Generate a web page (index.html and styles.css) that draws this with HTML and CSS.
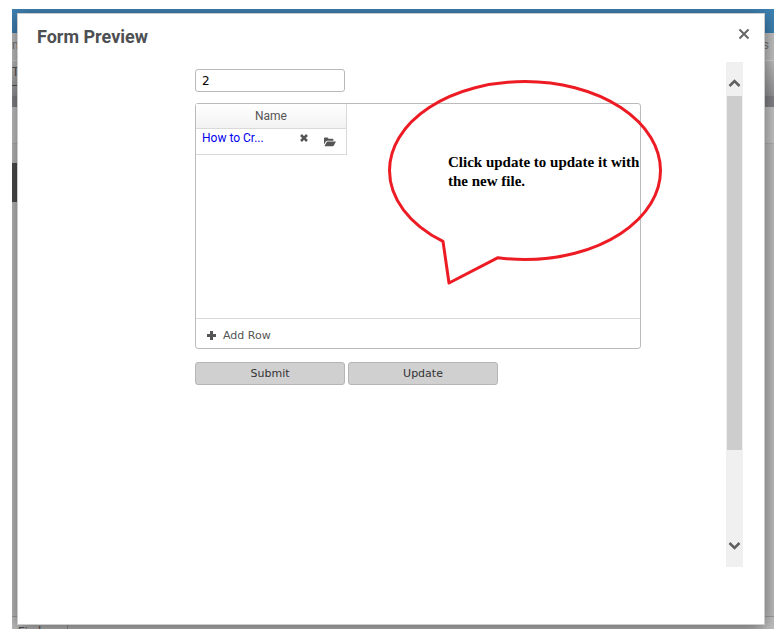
FILE: index.html
```html
<!DOCTYPE html>
<html lang="en">
<head>
<meta charset="utf-8">
<title>Form Preview</title>
<link rel="stylesheet" href="styles.css">
</head>
<body>
<div class="stage">
  <div class="page" aria-hidden="true">
    <div class="page-top"></div>
    <div class="page-nav"><span>n</span><span>s</span></div>
    <div class="page-tools"><span>Tt</span></div>
    <div class="page-rule"></div>
    <div class="page-space"></div>
    <div class="page-main"><div class="page-tab"></div></div>
    <div class="page-foot"><span>Find</span></div>
  </div>
  <section class="modal" role="dialog" aria-labelledby="title">
    <header class="modal-head">
      <h1 id="title">Form Preview</h1>
      <button class="close" type="button" aria-label="Close">
        <svg width="12" height="12" viewBox="0 0 12 12"><path d="M1.5 1.5l9 9M10.5 1.5l-9 9" stroke="#666" stroke-width="2" fill="none"/></svg>
      </button>
    </header>
    <div class="modal-body">
      <form class="form">
        <input class="field" type="text" value="2" aria-label="Value">
        <div class="grid-box">
          <div class="grid-view">
            <table class="files">
              <thead><tr><th>Name</th></tr></thead>
              <tbody><tr><td><div class="file">
                <a href="#">How to Cr...</a>
                <button class="icon remove" type="button" aria-label="Remove file"><svg width="8" height="8" viewBox="0 0 8 8"><path d="M1 1l6 6M7 1L1 7" stroke="#555" stroke-width="2.5"/></svg></button>
                <button class="icon browse" type="button" aria-label="Browse"><svg width="12" height="10" viewBox="0 0 12 10"><path d="M0 7.5V1.3Q0 .5.8.5H3.5L4.5 1.8H8.6Q9.4 1.8 9.4 2.6V3.7H3.5Q2.6 3.700 2 4.3ZM.6 9L2.700 5Q3 4.400 3.6 4.400H12L9.800 8.400Q9.400 9.200 8.600 9.200H.8Z" fill="#555"/></svg></button>
              </div></td></tr></tbody>
            </table>
          </div>
          <button class="add" type="button"><svg width="9" height="9" viewBox="0 0 9 9"><path d="M4.5 0v9M0 4.5h9" stroke="#555" stroke-width="3"/></svg>Add Row</button>
        </div>
        <div class="actions"><button type="submit">Submit</button><button type="button">Update</button></div>
        <div class="callout">
          <svg width="276" height="208" viewBox="0 0 276 208"><path d="M56 162.400A135.500 89 0 0 1 2.500 91.500A135.500 89 0 0 1 138 2.500A135.500 89 0 0 1 273.500 91.500A135.500 89 0 0 1 138 180.500A135.500 89 0 0 1 111 178.700L62 204Z" fill="none" stroke="#ed1c24" stroke-width="3" stroke-linejoin="round"/></svg>
          <p>Click update to update it with<br>the new file.</p>
        </div>
      </form>
      <div class="scrollbar" aria-hidden="true">
        <svg width="13" height="10" viewBox="0 0 13 10"><path d="M1.500 8L6.500 3l5 5" fill="none" stroke="#606060" stroke-width="2.500"/></svg>
        <div class="track"><div class="thumb"></div></div>
        <svg width="13" height="10" viewBox="0 0 13 10"><path d="M1.500 2L6.500 7l5-5" fill="none" stroke="#606060" stroke-width="2.500"/></svg>
      </div>
    </div>
  </section>
</div>
</body>
</html>
```
FILE: styles.css
```css
* { box-sizing: border-box; }
body {
  margin: 0;
  padding: 9px 8px 8px 12px;
  background: #fff;
  color: #555;
  font: 12px/16px Roboto, sans-serif;
}
button { font: inherit; color: inherit; cursor: pointer; }
svg { display: block; }
.stage { display: grid; overflow: hidden; min-height: calc(100vh - 17px); }
.page, .modal { grid-area: 1 / 1; min-width: 0; }
.page { display: flex; flex-direction: column; background: #c0c0c0; }
.page-top { height: 24px; background: #3f83b5; }
.page-nav { height: 28px; display: flex; justify-content: space-between; padding: 4px 5px 0 0; background: #c5c5c5; border-bottom: 1px solid #d5d5d5; color: #777; }
.page-tools { height: 35px; padding-top: 3px; background: linear-gradient(#c2c2c2, #97979b); }
.page-tools span { display: block; width: 20px; height: 22px; border-bottom: 1px solid #555; }
.page-rule { height: 11px; background: #85858b; }
.page-space { height: 37px; border-bottom: 1px solid #b3b3b3; background: #c8c8c8; }
.page-main { flex: 1; padding-top: 19px; }
.page-tab { width: 20px; height: 39px; background: #505050; }
.page-foot { height: 13px; border-top: 1px solid #a2a2a2; overflow: hidden; background: #c5c5c5; }
.page-foot span { display: block; width: 56px; height: 24px; padding: 7px 0 0 6px; border-right: 1px solid #999; }
.modal {
  margin: 4px 9px 4px 5px;
  padding: 0 21px 57px 19px;
  border: 1px solid #ccc;
  background: #fff;
  box-shadow: 0 4px 18px rgba(0, 0, 0, .5);
  display: flex;
  flex-direction: column;
}
.modal-head { display: flex; justify-content: space-between; height: 48px; padding-top: 8px; }
h1 { margin: 0; padding-top: 3px; font-size: 18px; line-height: 24px; font-weight: 700; color: #4d4f53; }
.close { width: 24px; height: 24px; margin-right: -13px; padding: 0; border: 0; background: none; display: grid; place-items: center; }
.modal-body { flex: 1; display: flex; }
.form { flex: 1; position: relative; margin-left: 158px; margin-right: 85px; padding-top: 7px; min-width: 0; }
.field { display: block; width: 150px; height: 23px; padding: 0 6px; border: 1px solid #b9b9b9; border-radius: 3px; color: #000; font: 12px "DejaVu Sans", sans-serif; }
.grid-box { margin-top: 11px; border: 1px solid #bbb; border-radius: 3px; }
.grid-view { height: 214px; }
.files { width: 151px; border-collapse: separate; border-spacing: 0; }
th, td { padding: 0; border: solid #d9d9d9; border-width: 0 1px 1px 0; }
th { height: 25px; font-weight: 400; font-size: 12px; background: linear-gradient(#fff, #f2f2f2); }
td { height: 26px; vertical-align: top; }
.file { display: flex; padding: 1px 10px 0 6px; }
.file a { color: #00e; text-decoration: none; width: 98px; }
.icon { padding: 0; border: 0; background: none; }
.remove { width: 24px; height: 16px; }
.browse { height: 24px; }
.add { width: 100%; height: 30px; display: flex; align-items: center; gap: 7px; padding: 3px 11px 0; border: 0; border-top: 1px solid #d9d9d9; background: none; font: 11px "DejaVu Sans", sans-serif; }
.actions { display: flex; gap: 3px; margin-top: 13px; }
.actions button { width: 150px; height: 23px; padding: 0; border: 1px solid #b5b5b5; border-radius: 3px; background: #d0d0d0; color: #333; font: 11px "DejaVu Sans", sans-serif; }
.callout { position: absolute; left: 192px; top: 17px; }
.callout p { position: absolute; left: 61px; top: 74px; margin: 0; white-space: nowrap; color: #000; font: bold 15px/19px "Liberation Serif", serif; }
.scrollbar { width: 17px; background: #f0f0f0; display: flex; flex-direction: column; align-items: center; padding: 16px 1px; }
.track { flex: 1; width: 15px; padding: 8px 0; }
.thumb { height: 354px; background: #cdcdcd; }
```
